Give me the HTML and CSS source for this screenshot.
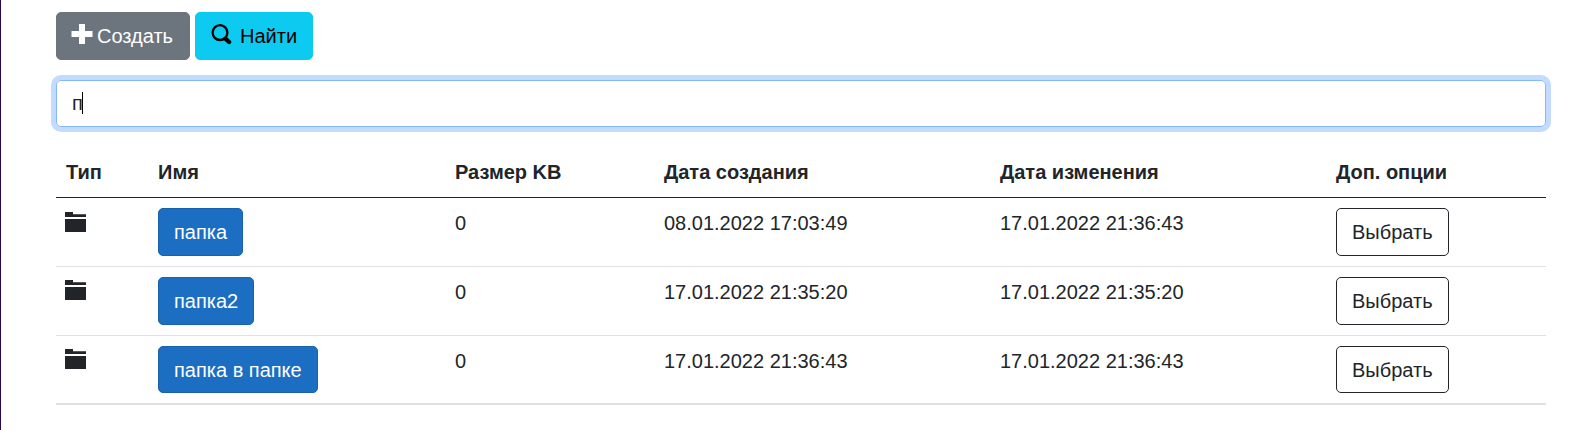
FILE: index.html
```html
<!DOCTYPE html>
<html lang="ru">
<head>
<meta charset="utf-8">
<title>Файлы</title>
<link rel="stylesheet" href="styles.css">
</head>
<body>
<svg class="symbols" aria-hidden="true">
  <symbol id="folder" viewBox="0 0 21 20"><path d="M0 0h8v2.3h13V5H0zM0 7h21v13H0z"/></symbol>
</svg>
<main class="page">
  <div class="toolbar">
    <button class="btn btn-create"><svg class="icon" viewBox="0 0 22 20"><path d="M8 0h6v7h7.5v6H14v7H8v-7H.5V7H8z"/></svg><span>Создать</span></button>
    <button class="btn btn-find"><svg class="icon" viewBox="0 0 22 21"><circle cx="9" cy="8.6" r="7.4" fill="none" stroke="currentColor" stroke-width="2.3"/><path d="M14.4 14.6l3.7 3.4" stroke="currentColor" stroke-width="4.3" stroke-linecap="round"/></svg><span>Найти</span></button>
  </div>
  <div class="search"><span class="query">п</span><span class="caret"></span></div>
  <table class="files">
    <colgroup><col class="c-type"><col class="c-name"><col class="c-size"><col class="c-date"><col class="c-date"><col class="c-options"></colgroup>
    <thead>
      <tr><th>Тип</th><th>Имя</th><th>Размер KB</th><th>Дата создания</th><th>Дата изменения</th><th>Доп. опции</th></tr>
    </thead>
    <tbody>
      <tr><td><svg class="folder"><use href="#folder"/></svg></td><td><button class="btn btn-name">папка</button></td><td>0</td><td>08.01.2022 17:03:49</td><td>17.01.2022 21:36:43</td><td><button class="btn btn-select">Выбрать</button></td></tr>
      <tr><td><svg class="folder"><use href="#folder"/></svg></td><td><button class="btn btn-name">папка2</button></td><td>0</td><td>17.01.2022 21:35:20</td><td>17.01.2022 21:35:20</td><td><button class="btn btn-select">Выбрать</button></td></tr>
      <tr class="last"><td><svg class="folder"><use href="#folder"/></svg></td><td><button class="btn btn-name">папка в папке</button></td><td>0</td><td>17.01.2022 21:36:43</td><td>17.01.2022 21:36:43</td><td><button class="btn btn-select">Выбрать</button></td></tr>
    </tbody>
  </table>
</main>
</body>
</html>
```
FILE: styles.css
```css
* { box-sizing: border-box; }
body {
  margin: 0;
  background: #fff;
  color: #212529;
  font: 20px/30px "Liberation Sans", Arial, sans-serif;
}
.symbols { display: none; }
.page {
  height: 430px;
  padding: 12px 39px 0 55px;
  border-left: 1px solid #260b52;
  overflow: hidden;
}
.toolbar { display: flex; gap: 5px; }
.btn {
  display: flex;
  align-items: center;
  height: 48px;
  margin: 0;
  padding: 0 15px;
  border: 1px solid transparent;
  border-radius: 5px;
  font: inherit;
  white-space: nowrap;
}
.btn-create { width: 134px; padding: 0 14px; background: #6c757d; border-color: #6c757d; color: #fff; }
.btn-find { width: 118px; background: #0dcaf0; border-color: #0dcaf0; color: #000; }
.icon { flex: none; width: 22px; height: 20px; margin: 0 4px 4px 0; fill: currentColor; }
.btn-find .icon { height: 21px; margin: 0 7px 3px 0; }
.search {
  display: flex;
  align-items: center;
  height: 47px;
  margin-top: 20px;
  padding: 0 15px 1px;
  border: 1px solid #86b7fe;
  border-radius: 5px;
  box-shadow: 0 0 0 5px #c2dbfe;
}
.caret { width: 1px; height: 22px; margin-left: -1px; background: #000; }
.files {
  width: 1490px;
  margin-top: 20px;
  table-layout: fixed;
  border-collapse: separate;
  border-spacing: 0;
}
.c-type { width: 92px; }
.c-name { width: 297px; }
.c-size { width: 209px; }
.c-date { width: 336px; }
.c-options { width: 220px; }
th, td { padding: 10px; text-align: left; vertical-align: top; }
th { border-bottom: 1px solid #212529; }
td { border-bottom: 1px solid #dee2e6; }
.last td { border-bottom-width: 2px; }
.last .btn { height: 47px; }
.folder { display: block; width: 21px; height: 20px; margin: 4px 0 0 -1px; fill: #212529; }
tr + tr .folder { margin-top: 3px; }
.btn-name { background: #1b6ec2; border-color: #1861ac; color: #fff; }
.btn-select { background: transparent; border-color: #212529; color: #212529; }
```
